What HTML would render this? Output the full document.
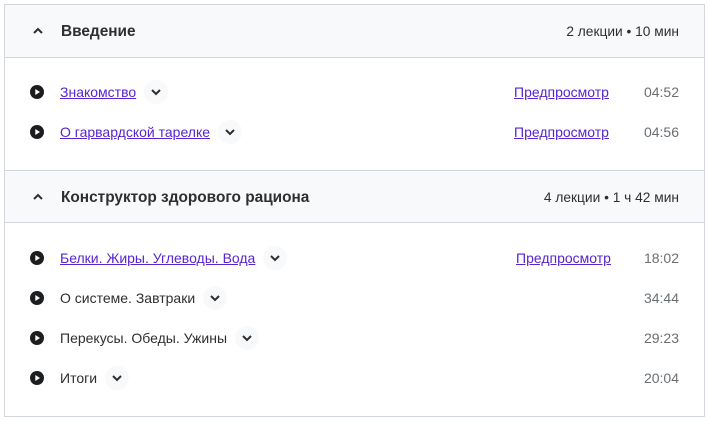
<!DOCTYPE html>
<html><head><meta charset="utf-8"><style>
*{margin:0;padding:0;box-sizing:border-box}
body{width:708px;height:421px;background:#fff;font-family:"Liberation Sans","Noto Sans CJK SC",sans-serif;color:#2d2f31;position:relative;overflow:hidden}
.box{position:absolute;left:4px;top:4px;width:701px;height:413px;border:1px solid #d1d7dc}
.hd{position:absolute;left:5px;width:699px;height:53px;background:#f7f9fa;border-bottom:1px solid #d1d7dc}
.hd .t{position:absolute;left:56px;top:1px;line-height:52px;font-weight:bold;font-size:15.4px;color:#2d2f31}
.hd .m{position:absolute;right:25px;top:1px;line-height:52px;font-size:13.75px;color:#2d2f31}
.hd svg{position:absolute;left:27px;top:21px}
.row{position:absolute;left:0;width:708px;height:30px}
.row .p{position:absolute;left:30px;top:8px}
.row .n{position:absolute;left:60px;top:0;line-height:30px;font-size:14px;display:flex;align-items:center}
.n a{color:#5624d0;text-decoration:underline}
.n span{color:#2d2f31}
.b{display:inline-block;width:24px;height:24px;border-radius:50%;background:#f7f9fa;margin-left:8px;position:relative}
.b svg{position:absolute;left:6px;top:7px}
.pv{position:absolute;top:0;line-height:30px;font-size:14px;color:#5624d0;text-decoration:underline}
.d{position:absolute;right:29px;top:0;line-height:30px;font-size:14px;color:#6a6f73}
</style></head><body>
<div class="box"></div>
<div class="hd" style="top:5px"><svg width="12" height="10" viewBox="0 0 12 10"><path d="M2 7 L6 3 L10 7" stroke="#2d2f31" stroke-width="2" fill="none"/></svg><div class="t">Введение</div><div class="m">2 лекции • 10 мин</div></div>
<div class="hd" style="border-top:1px solid #d1d7dc;top:170px"><svg width="12" height="10" viewBox="0 0 12 10"><path d="M2 7 L6 3 L10 7" stroke="#2d2f31" stroke-width="2" fill="none"/></svg><div class="t">Конструктор здорового рациона</div><div class="m">4 лекции • 1 ч 42 мин</div></div>

<svg width="0" height="0" style="position:absolute"><defs><g id="pl"><circle cx="7" cy="7" r="7" fill="#1c1d1f"/><path d="M5.3 4 L10 7 L5.3 10Z" fill="#fff"/></g><g id="ch"><path d="M2 3 L6 7 L10 3" stroke="#2d2f31" stroke-width="2" fill="none"/></g></defs></svg>

<div class="row" style="top:77px"><svg class="p" width="14" height="14"><use href="#pl"/></svg><div class="n"><a>Знакомство</a><i class="b"><svg width="12" height="10"><use href="#ch"/></svg></i></div><div class="pv" style="left:514px">Предпросмотр</div><div class="d">04:52</div></div>
<div class="row" style="top:117px"><svg class="p" width="14" height="14"><use href="#pl"/></svg><div class="n"><a>О гарвардской тарелке</a><i class="b"><svg width="12" height="10"><use href="#ch"/></svg></i></div><div class="pv" style="left:514px">Предпросмотр</div><div class="d">04:56</div></div>

<div class="row" style="top:243px"><svg class="p" width="14" height="14"><use href="#pl"/></svg><div class="n"><a>Белки. Жиры. Углеводы. Вода</a><i class="b"><svg width="12" height="10"><use href="#ch"/></svg></i></div><div class="pv" style="left:516px">Предпросмотр</div><div class="d">18:02</div></div>
<div class="row" style="top:283px"><svg class="p" width="14" height="14"><use href="#pl"/></svg><div class="n"><span>О системе. Завтраки</span><i class="b"><svg width="12" height="10"><use href="#ch"/></svg></i></div><div class="d">34:44</div></div>
<div class="row" style="top:323px"><svg class="p" width="14" height="14"><use href="#pl"/></svg><div class="n"><span>Перекусы. Обеды. Ужины</span><i class="b"><svg width="12" height="10"><use href="#ch"/></svg></i></div><div class="d">29:23</div></div>
<div class="row" style="top:363px"><svg class="p" width="14" height="14"><use href="#pl"/></svg><div class="n"><span>Итоги</span><i class="b"><svg width="12" height="10"><use href="#ch"/></svg></i></div><div class="d">20:04</div></div>
</body></html>
